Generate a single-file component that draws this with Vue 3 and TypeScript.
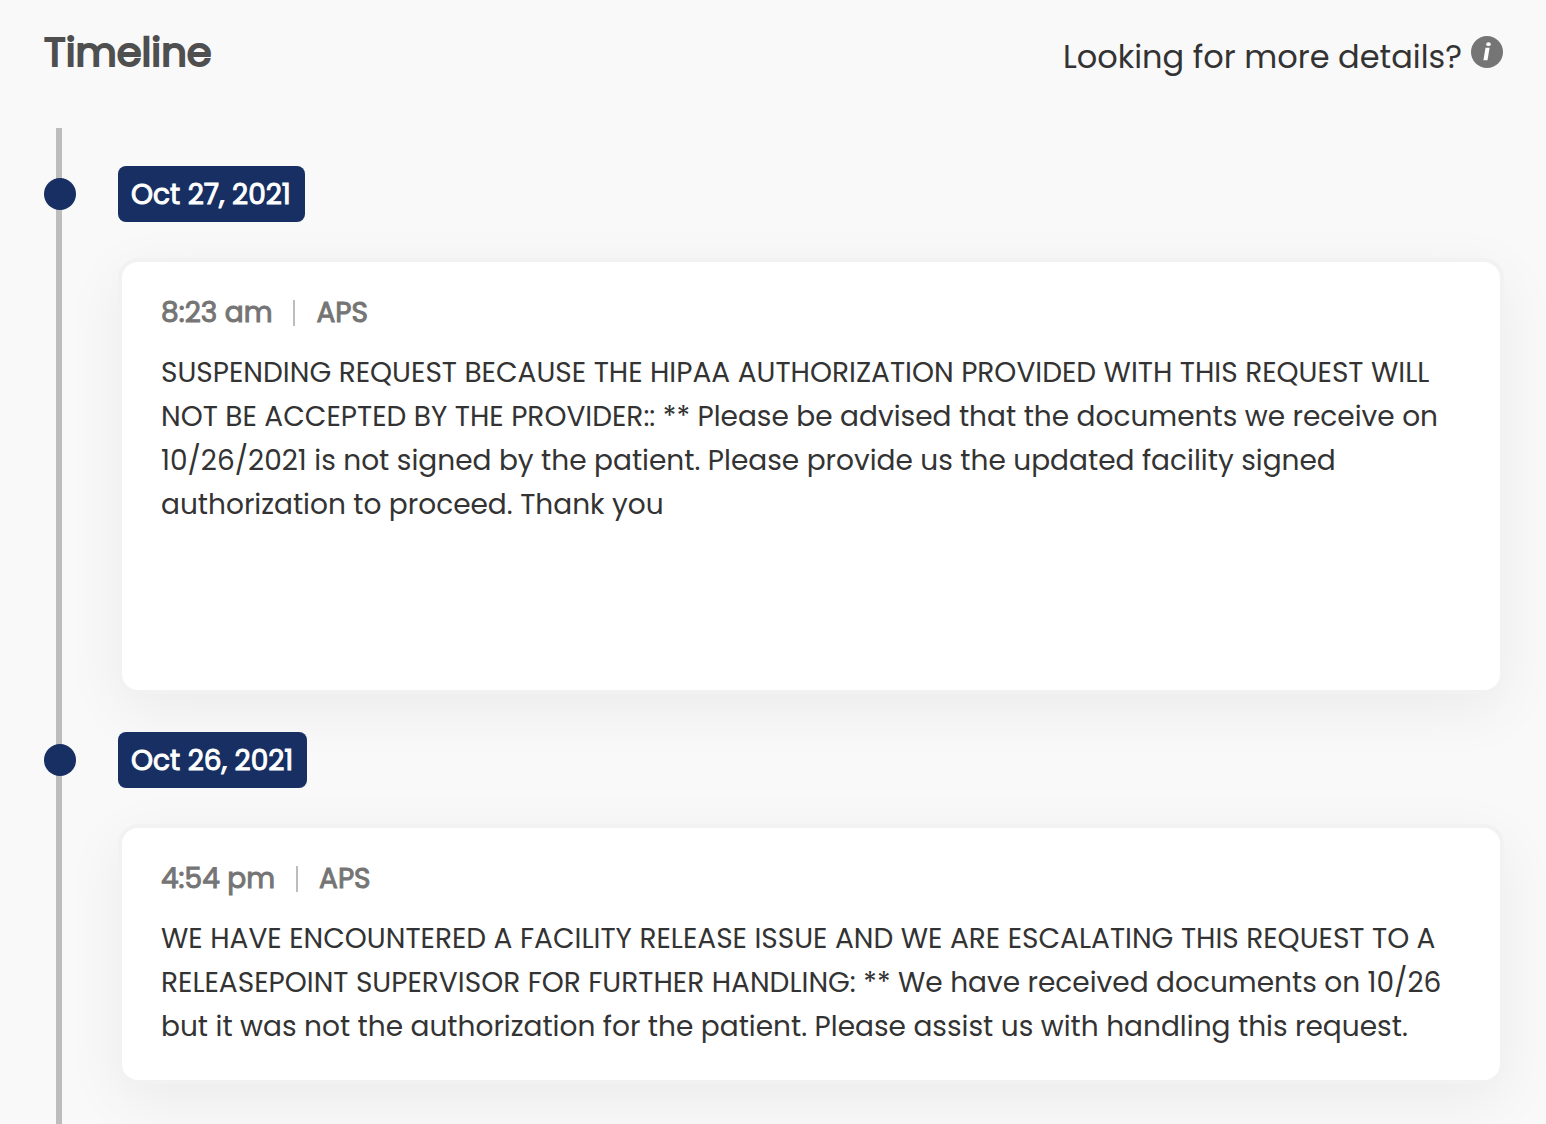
<script setup lang="ts">
interface TimelineEvent {
  time: string
  source: string
  message: string
  tall?: boolean
}

interface TimelineDay {
  date: string
  iso: string
  events: TimelineEvent[]
}

const days: TimelineDay[] = [
  {
    date: 'Oct 27, 2021',
    iso: '2021-10-27',
    events: [
      {
        time: '8:23 am',
        source: 'APS',
        message:
          'SUSPENDING REQUEST BECAUSE THE HIPAA AUTHORIZATION PROVIDED WITH THIS REQUEST WILL NOT BE ACCEPTED BY THE PROVIDER:: ** Please be advised that the documents we receive on 10/26/2021 is not signed by the patient. Please provide us the updated facility signed authorization to proceed. Thank you',
        tall: true,
      },
    ],
  },
  {
    date: 'Oct 26, 2021',
    iso: '2021-10-26',
    events: [
      {
        time: '4:54 pm',
        source: 'APS',
        message:
          'WE HAVE ENCOUNTERED A FACILITY RELEASE ISSUE AND WE ARE ESCALATING THIS REQUEST TO A RELEASEPOINT SUPERVISOR FOR FURTHER HANDLING: ** We have received documents on 10/26 but it was not the authorization for the patient. Please assist us with handling this request.',
      },
    ],
  },
]
</script>

<template>
  <main class="page">
    <header class="header">
      <h1 class="title">Timeline</h1>
      <div class="details">
        <span class="details-label">Looking for more details?</span>
        <button class="info" type="button" aria-label="More details">
          <svg viewBox="0 0 32 32" width="32" height="32" aria-hidden="true">
            <circle cx="16" cy="16" r="16" fill="#757575" />
            <path d="M14.5 11.8h4.1l-2.1 12.4h-4.1z" fill="#fff" />
            <ellipse cx="17.5" cy="8.2" rx="2.3" ry="1.9" fill="#fff" />
          </svg>
        </button>
      </div>
    </header>

    <div class="timeline">
      <section v-for="day in days" :key="day.iso" class="day">
        <div class="day-head">
          <span class="dot"></span>
          <h2 class="badge"><time :datetime="day.iso">{{ day.date }}</time></h2>
        </div>
        <article
          v-for="event in day.events"
          :key="event.time"
          class="card"
          :class="{ tall: event.tall }"
        >
          <div class="meta">
            <span>{{ event.time }}</span>
            <span class="divider"></span>
            <span>{{ event.source }}</span>
          </div>
          <p class="message">{{ event.message }}</p>
        </article>
      </section>
    </div>
  </main>
</template>

<style>
body {
  margin: 0;
  background: #f9f9f9;
}
</style>

<style scoped>
.page {
  box-sizing: border-box;
  display: flex;
  flex-direction: column;
  min-height: 100vh;
  padding: 28px 42px 0 44px;
  background: #f9f9f9;
  color: #333;
  font-family: Poppins, Inter, sans-serif;
}

.header {
  display: flex;
  justify-content: space-between;
  align-items: flex-start;
  height: 100px;
}

.title {
  margin: 0;
  color: #4f4f4f;
  font-size: 40px;
  font-weight: 400;
  line-height: 48px;
  -webkit-text-stroke: 2px;
}

.details {
  display: flex;
  gap: 9px;
  padding-right: 1px;
  font-size: 32px;
  line-height: 58px;
}

.info {
  width: 32px;
  height: 32px;
  margin: 8px 0 0;
  padding: 0;
  border: 0;
  background: none;
  cursor: pointer;
}

.info svg {
  display: block;
}

.timeline {
  flex: 1;
  padding-top: 38px;
  background: linear-gradient(#bdbdbd, #bdbdbd) 12px 0 / 6px 100% no-repeat;
}

.day {
  margin-bottom: 38px;
}

.day:last-child {
  margin-bottom: 0;
  padding-bottom: 40px;
}

.day-head {
  display: flex;
  align-items: center;
  gap: 42px;
  margin-bottom: 36px;
}

.dot {
  width: 32px;
  height: 32px;
  border-radius: 50%;
  background: #172f62;
}

.badge {
  position: relative;
  z-index: 1;
  margin: 0;
  padding: 2px 14px 0 13px;
  border-radius: 8px;
  background: #172f62;
  color: #fff;
  font-size: 28px;
  font-weight: 400;
  line-height: 54px;
  -webkit-text-stroke: 1px;
}

.card {
  box-sizing: border-box;
  margin-left: 74px;
  padding: 29px 39px 31px;
  border: 4px solid #f2f2f2;
  border-radius: 20px;
  background: #fff;
  box-shadow: 0 16px 60px rgba(0, 0, 0, 0.06);
}

.card.tall {
  min-height: 436px;
}

.meta {
  display: flex;
  align-items: center;
  gap: 21px;
  color: #757575;
  font-size: 28px;
  font-weight: 400;
  line-height: 44px;
  -webkit-text-stroke: 1px;
}

.divider {
  width: 2px;
  height: 26px;
  background: #bdbdbd;
}

.message {
  margin: 16px 0 0;
  font-size: 28px;
  line-height: 44px;
}
</style>
